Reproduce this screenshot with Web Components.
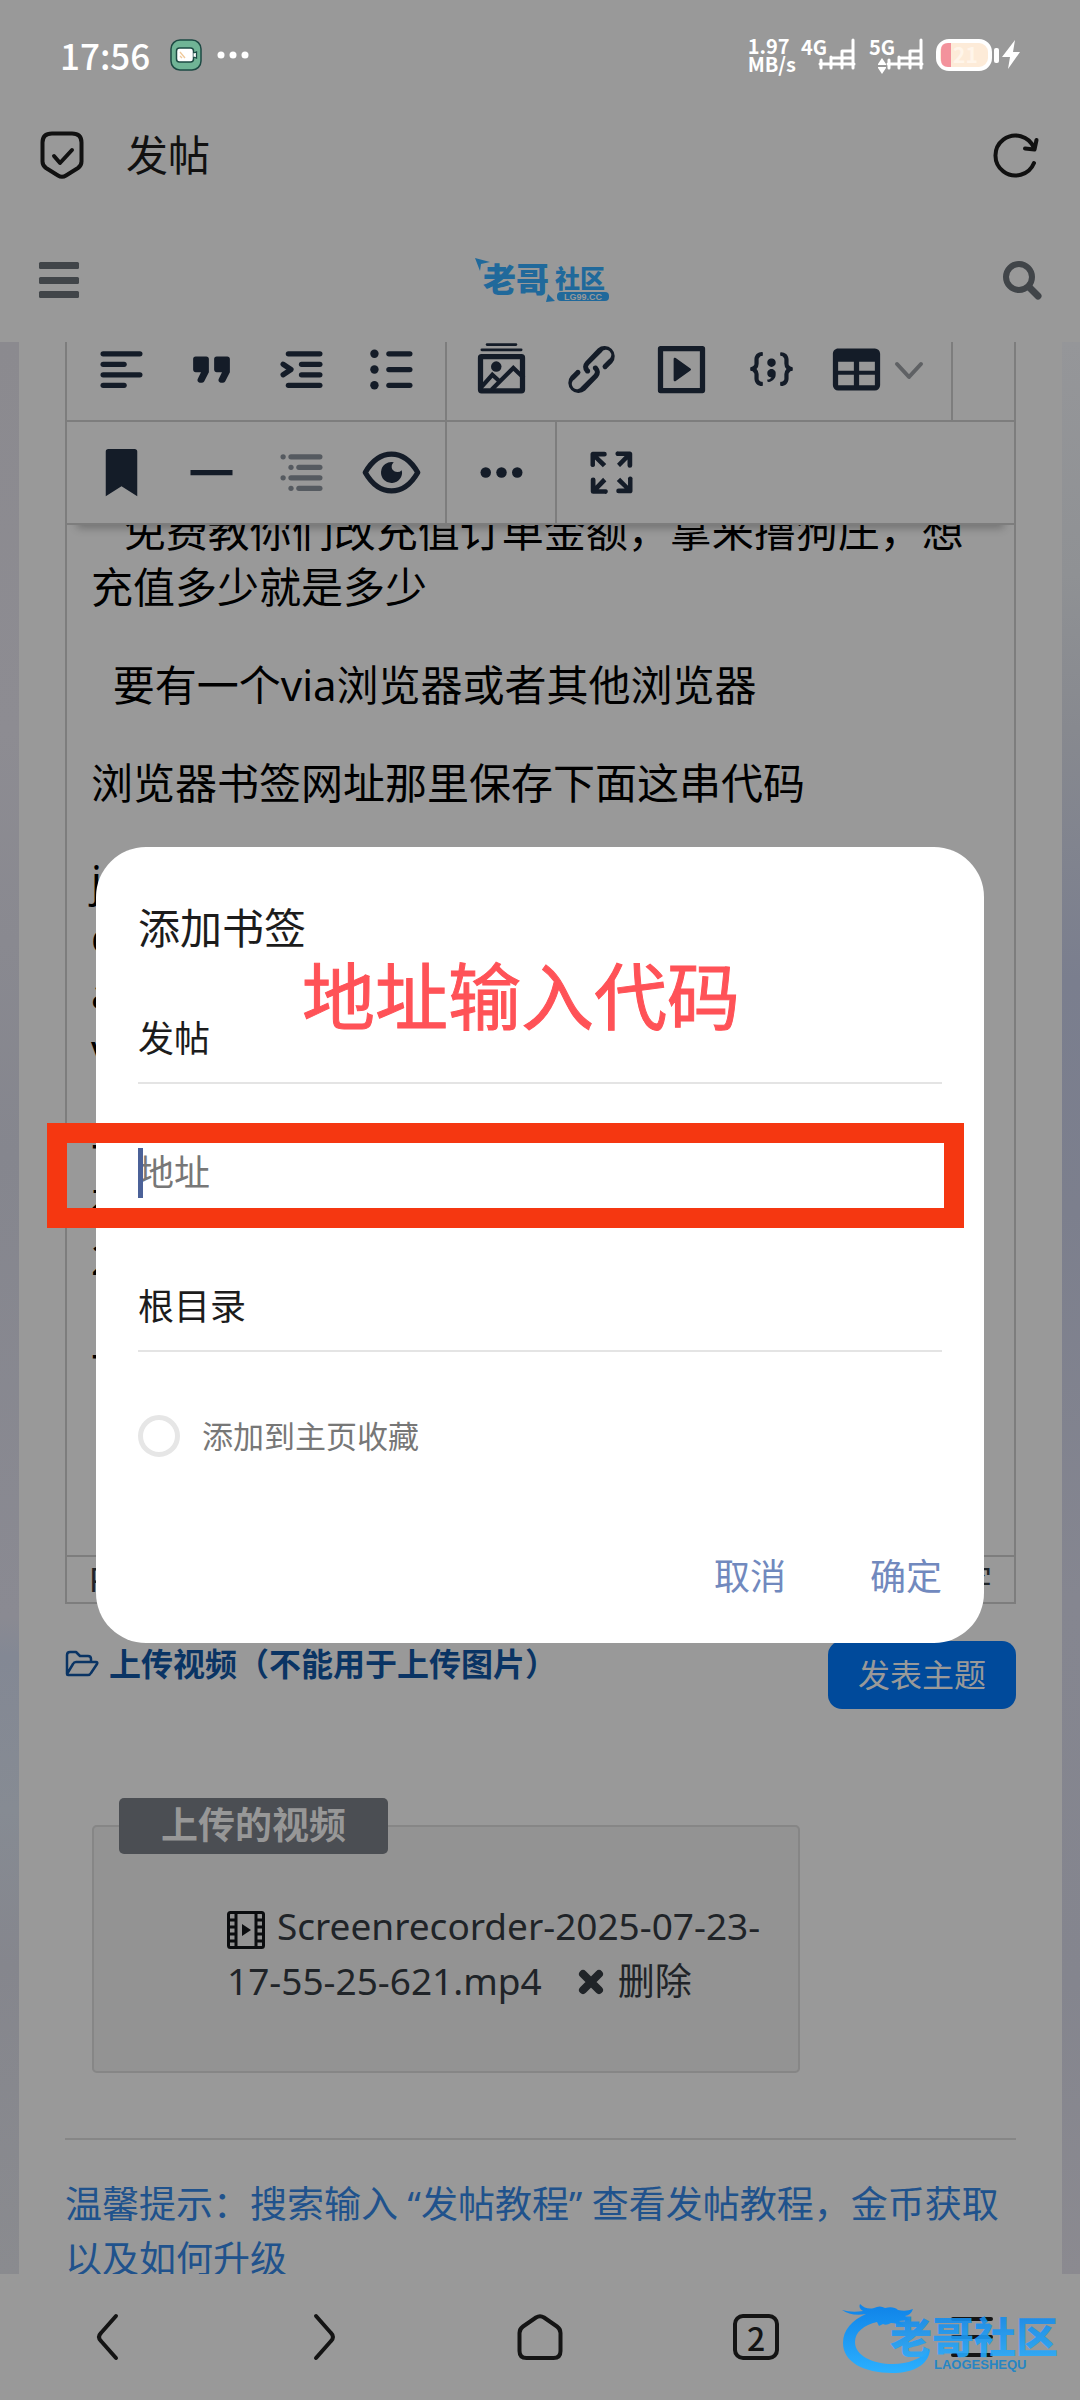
<!DOCTYPE html>
<html lang="zh-CN">
<head>
<meta charset="utf-8">
<meta name="viewport" content="width=device-width, initial-scale=1">
<title>发帖</title>
<style>
  html, body { margin: 0; height: 100%; }
  body {
    font-family: "Noto Sans", "Noto Sans CJK SC", sans-serif;
    font-size: 37px;
    line-height: 55px;
    color: #202428;
    background: #999;
    -webkit-text-size-adjust: none;
  }
</style>
</head>
<body>
<phone-screen>
  <status-bar></status-bar>
  <browser-bar>发帖</browser-bar>
  <site-header></site-header>
  <page-view>
    <post-editor></post-editor>
    <upload-actions></upload-actions>
    <uploaded-videos></uploaded-videos>
    <page-tip>温馨提示：搜索输入 “发帖教程” 查看发帖教程，金币获取以及如何升级</page-tip>
  </page-view>
  <bottom-nav tabs="2"></bottom-nav>
  <bookmark-dialog slot="overlay" heading="添加书签">
    <red-note slot="note">地址输入代码</red-note>
  </bookmark-dialog>
</phone-screen>

<script>
const BASE = `<style>
  :host, *, *::before, *::after { box-sizing: border-box; }
  button, input, select { font: inherit; color: inherit; background: none; border: 0; margin: 0; padding: 0; border-radius: 0; outline: 0; appearance: none; }
  svg { display: block; overflow: visible; }
</style>`;

function define(name, markup) {
  customElements.define(name, class extends HTMLElement {
    connectedCallback() {
      if (this.shadowRoot) return;
      const root = this.attachShadow({ mode: 'open' });
      root.innerHTML = BASE + (typeof markup === 'function' ? markup(this) : markup);
    }
  });
}

const ICONS = {
  alignLeft: '<rect x="4" y="5" width="16" height="2" rx="1"/><rect x="4" y="9" width="10" height="2" rx="1"/><rect x="4" y="13" width="16" height="2" rx="1"/><rect x="4" y="17" width="10" height="2" rx="1"/>',
  quote: '<path d="M7.5 17h.9c.4 0 .7-.2.9-.6L11 13V8c0-.6-.4-1-1-1H6a1 1 0 0 0-1 1v4c0 .6.4 1 1 1h2l-1.3 2.7a1 1 0 0 0 .8 1.3Zm8 0h.9c.4 0 .7-.2.9-.6L19 13V8c0-.6-.4-1-1-1h-4a1 1 0 0 0-1 1v4c0 .6.4 1 1 1h2l-1.3 2.7a1 1 0 0 0 .8 1.3Z"/>',
  indent: '<rect x="6" y="5" width="14" height="2" rx="1"/><rect x="11" y="9" width="9" height="2" rx="1"/><rect x="11" y="13" width="9" height="2" rx="1"/><rect x="6" y="17" width="14" height="2" rx="1"/><path d="M5 10l3 2-3 2" fill="none" stroke="currentColor" stroke-width="2" stroke-linecap="round" stroke-linejoin="round"/>',
  list: '<circle cx="5.5" cy="6" r="1.6"/><circle cx="5.5" cy="12" r="1.6"/><circle cx="5.5" cy="18" r="1.6"/><rect x="10" y="5" width="10" height="2" rx="1"/><rect x="10" y="11" width="10" height="2" rx="1"/><rect x="10" y="17" width="10" height="2" rx="1"/>',
  gallery: '<rect x="6" y="2" width="12" height="1" rx=".5"/><rect x="4" y="4" width="16" height="1" rx=".5"/><rect x="4" y="7.1" width="16" height="13" rx=".4" fill="none" stroke="currentColor" stroke-width="2"/><circle cx="10" cy="10.9" r="2"/><path d="M4.500 18.500l4-4.500 2.300 2.100M8.200 19.700l8.300-8.300 4 3.800" fill="none" stroke="currentColor" stroke-width="1.600"/>',
  link: '<path d="M6.2 12.3a1 1 0 0 1 1.4 1.4l-2 2a2 2 0 1 0 2.6 2.8l4.8-4.8a1 1 0 0 0 0-1.4 1 1 0 1 1 1.4-1.3 2.9 2.9 0 0 1 0 4L9.6 20a3.9 3.9 0 0 1-5.5-5.5l2-2Zm11.6-.6a1 1 0 0 1-1.4-1.4l2-2a2 2 0 1 0-2.6-2.8L11 10.3a1 1 0 0 0 0 1.4A1 1 0 1 1 9.6 13a2.9 2.9 0 0 1 0-4L14.4 4a3.9 3.9 0 0 1 5.5 5.5l-2 2Z"/>',
  media: '<path fill-rule="evenodd" d="M4 3h16c.6 0 1 .4 1 1v16c0 .6-.4 1-1 1H4a1 1 0 0 1-1-1V4c0-.6.4-1 1-1Zm1 2v14h14V5H5Zm4.800 2.600 5.600 4a.5.5 0 0 1 0 .8l-5.600 4A.5.5 0 0 1 9 16V8a.5.5 0 0 1 .8-.4Z"/>',
  code: '<path fill-rule="evenodd" transform="translate(0 -1.200)" d="M7.1 11a2.8 2.8 0 0 1-.8 2 2.8 2.8 0 0 1 .8 2v1.7c0 .3.1.6.4.8.2.3.5.4.8.4.3 0 .4.2.4.4v.8c0 .2-.1.4-.4.4-.7 0-1.4-.3-2-.8-.5-.6-.8-1.3-.8-2V15c0-.3-.1-.6-.4-.8-.2-.3-.5-.4-.8-.4a.4.4 0 0 1-.4-.4v-.8c0-.2.2-.4.4-.4.3 0 .6-.1.8-.4.3-.2.4-.5.4-.8V9.300c0-.7.3-1.4.8-2 .6-.5 1.3-.8 2-.8.3 0 .4.2.4.4v.8c0 .2-.1.4-.4.4-.3 0-.6.1-.8.4-.3.2-.4.5-.4.8V11Zm9.800 0V9.300c0-.3-.1-.6-.4-.8-.2-.3-.5-.4-.8-.4a.4.4 0 0 1-.4-.4V7c0-.2.1-.4.4-.4.7 0 1.4.3 2 .8.5.6.8 1.3.8 2V11c0 .3.1.6.4.8.2.3.5.4.8.4.2 0 .4.2.4.4v.8c0 .2-.2.4-.4.4-.3 0-.6.1-.8.4-.3.2-.4.5-.4.8v1.7c0 .7-.3 1.4-.8 2-.6.5-1.300.8-2 .8a.4.4 0 0 1-.4-.4v-.8c0-.2.1-.4.4-.4.3 0 .6-.1.8-.4.3-.2.4-.5.4-.8V15a2.800 2.800 0 0 1 .8-2 2.800 2.800 0 0 1-.8-2Zm-3.300-.4c0 .4-.1.8-.5 1.100-.3.3-.7.5-1.100.5-.4 0-.8-.2-1.100-.5-.4-.3-.5-.7-.5-1.100 0-.5.1-.9.5-1.200.3-.3.7-.4 1.100-.4.4 0 .8.1 1.100.4.4.3.5.7.5 1.200ZM12 13c.4 0 .8.1 1.100.5.4.3.5.7.5 1.100 0 1-.1 1.600-.5 2a3 3 0 0 1-1.100 1c-.4.3-.8.4-1.100.4a.5.5 0 0 1-.5-.5V17a3 3 0 0 0 1-.2l.6-.6c-.6 0-1-.2-1.300-.5-.2-.3-.3-.7-.3-1 0-.5.1-1 .5-1.200.3-.4.7-.5 1.100-.5Z"/>',
  table: '<path fill-rule="evenodd" d="M19 4a2 2 0 0 1 2 2v12a2 2 0 0 1-2 2H5a2 2 0 0 1-2-2V6c0-1.100.9-2 2-2h14ZM5 14v4h6v-4H5Zm14 0h-6v4h6v-4Zm0-5h-6v3.500h6V9ZM5 12.500h6V9H5v3.500Z"/>',
  bookmark: '<path d="M6 4v17l6-3.800 6 3.800V4c0-.6-.4-1-1-1H7a1 1 0 0 0-1 1Z"/>',
  rule: '<path d="M4 11h16v2H4z"/>',
  toc: '<g opacity=".5"><circle cx="5" cy="6" r="1"/><rect x="7" y="5" width="13" height="2" rx="1"/><circle cx="8" cy="10" r="1"/><rect x="10" y="9" width="10" height="2" rx="1"/><circle cx="5" cy="14" r="1"/><rect x="7" y="13" width="13" height="2" rx="1"/><circle cx="8" cy="18" r="1"/><rect x="10" y="17" width="10" height="2" rx="1"/></g>',
  eye: '<path d="M2 12C4.700 7.300 8 5 12 5s7.300 2.300 10 7c-2.700 4.700-6 7-10 7s-7.300-2.300-10-7z" fill="none" stroke="currentColor" stroke-width="2" stroke-linejoin="round"/><path d="M12.900 8.100a4 4 0 1 0 3 3 2.300 2.300 0 0 1-3.400-.1c-.7-.9-.5-2.200.4-2.900z"/>',
  more: '<circle cx="6" cy="12" r="2"/><circle cx="12" cy="12" r="2"/><circle cx="18" cy="12" r="2"/>',
  expand: '<path d="m15.300 10-1.200-1.300 2.900-3h-2.300a.9.9 0 1 1 0-1.700H19c.5 0 .9.4.9.9v4.400a.9.9 0 1 1-1.800 0V7l-2.900 3Zm0 4 3 3v-2.300a.9.9 0 1 1 1.700 0V19c0 .5-.4.9-.9.9h-4.400a.9.9 0 1 1 0-1.800H17l-3-2.900 1.300-1.200ZM10 15.400l-2.900 3h2.300a.9.9 0 1 1 0 1.700H5a.9.9 0 0 1-.9-.9v-4.400a.9.9 0 1 1 1.800 0V17l2.900-3 1.200 1.300ZM8.700 10 5.700 7v2.300a.9.9 0 0 1-1.700 0V5c0-.5.4-.9.9-.9h4.400a.9.9 0 0 1 0 1.800H7l3 2.900-1.300 1.200Z"/>'
};

define('tool-button', el => `<style>
  :host { display: block; }
  button { display: flex; align-items: center; justify-content: center; width: 90px; height: 100%; color: #141c28; }
  button.menu { width: 126px; justify-content: flex-start; padding-left: 9px; }
</style>
<button type="button" class="${el.hasAttribute('menu') ? 'menu' : ''}" aria-label="${el.getAttribute('label')}">
  <svg width="63" height="63" viewBox="0 0 24 24" fill="currentColor">${ICONS[el.getAttribute('icon')]}</svg>
  ${el.hasAttribute('menu') ? '<svg width="40" height="40" viewBox="0 0 40 40" fill="none" stroke="#5f6164" stroke-width="4" stroke-linecap="round" stroke-linejoin="round"><path d="M9 14l12 13 12-13"/></svg>' : ''}
</button>`);

define('tool-group', `<style>
  :host { display: flex; align-items: stretch; padding: 0 9px; border-right: 2px solid #7d7d7d; }
  :host([last]) { border-right: 0; }
</style><slot></slot>`);

define('post-editor', `<style>
  :host { display: block; margin-top: -23px; border: 2px solid #7d7d7d; border-top: 0; }
  .tools { position: relative; z-index: 1; background: #999; }
  .tools::after { content: ""; position: absolute; z-index: -1; inset: auto 10px 0; height: 20px; box-shadow: 0 3px 8px #0004; }
  .row { position: relative; display: flex; height: 103px; background: #999; border-bottom: 2px solid #7d7d7d; }
  .body { margin-top: -22px; min-height: 1052px; padding: 0 24px; font-size: 42px; line-height: 56px; color: #000; white-space: pre-wrap; outline: 0; }
  p { margin: 0 0 42px; }
  footer { display: flex; justify-content: space-between; height: 47px; padding: 0 22px; border-top: 2px solid #7d7d7d; font-size: 32px; line-height: 45px; }
</style>
<div class="tools">
  <div class="row">
    <tool-group><tool-button icon="alignLeft" label="左对齐"></tool-button><tool-button icon="quote" label="引用"></tool-button><tool-button icon="indent" label="缩进"></tool-button><tool-button icon="list" label="列表"></tool-button></tool-group>
    <tool-group><tool-button icon="gallery" label="图片"></tool-button><tool-button icon="link" label="链接"></tool-button><tool-button icon="media" label="媒体"></tool-button><tool-button icon="code" label="代码"></tool-button><tool-button icon="table" label="表格" menu></tool-button></tool-group>
  </div>
  <div class="row">
    <tool-group><tool-button icon="bookmark" label="书签"></tool-button><tool-button icon="rule" label="分隔线"></tool-button><tool-button icon="toc" label="目录"></tool-button><tool-button icon="eye" label="预览"></tool-button></tool-group>
    <tool-group><tool-button icon="more" label="更多"></tool-button></tool-group>
    <tool-group last><tool-button icon="expand" label="全屏"></tool-button></tool-group>
  </div>
</div>
<div class="body" contenteditable="true" spellcheck="false"><p>   免费教你们改充值订单金额，拿来撸狗庄，想充值多少就是多少</p><p>  要有一个via浏览器或者其他浏览器</p><p>浏览器书签网址那里保存下面这串代码</p><p>j
c
a
v</p><p>一
在
2</p><p>一</p></div>
<footer><span>P</span><span>字</span></footer>`);

define('phone-screen', `<style>
  :host { position: relative; display: flex; flex-direction: column; height: 100vh; overflow: hidden; background: #999; }
</style><slot></slot><slot name="overlay"></slot>`);

define('signal-bars', `<style>:host { display: block; }</style>
<svg width="38" height="32" viewBox="0 0 38 32" fill="none" stroke="#fff" stroke-width="3" stroke-linecap="round"><path d="M2 26h34M3 22v8M13 19v11M13 20h10M24 13v17M24 13h11M24 20h11M35 2v28"/></svg>`);

define('status-bar', `<style>
  :host { display: flex; align-items: center; justify-content: space-between; height: 93px; padding: 17px 58px 0 60px; color: #fff; font-family: "Noto Sans CJK SC", sans-serif; }
  div { display: flex; align-items: center; }
  time { font-size: 35px; font-weight: 500; line-height: 40px; margin-right: 5px; }
  .left { gap: 15px; }
  .right { gap: 4px; }
  .speed, .net { font-size: 20px; font-weight: 700; line-height: 18px; }
  .net { align-items: flex-start; }
  .net > div { flex-direction: column; width: 28px; height: 34px; gap: 2px; }
  .net signal-bars { margin-left: -10px; }
  .net + .net, .battery { margin-left: 8px; }
</style>
<div class="left">
  <time>17:56</time>
  <svg width="32" height="32" viewBox="0 0 32 32"><rect x="1" y="1" width="30" height="30" rx="9" fill="#70b496" stroke="#1d4a44" stroke-width="1.500"/><rect x="6.500" y="9" width="17" height="14" rx="3" fill="#fff" stroke="#1d4a44" stroke-width="1.500"/><path d="M23.500 14l3-1v6l-3-1" fill="#fff" stroke="#1d4a44" stroke-width="1.300"/><path d="M10 13l5 6M10 17l2 2" stroke="#efc99a" stroke-width="1.300"/></svg>
  <svg width="32" height="8" viewBox="0 0 32 8" fill="#fff"><circle cx="4" cy="4" r="3.500"/><circle cx="16" cy="4" r="3.500"/><circle cx="28" cy="4" r="3.500"/></svg>
</div>
<div class="right">
  <div class="speed"><span>1.97<br>MB/s</span></div>
  <div class="net"><div>4G</div><signal-bars></signal-bars></div>
  <div class="net"><div>5G<svg width="10" height="16" viewBox="0 0 10 16" fill="#fff"><path d="M5 0l4 6v1H1V6zM5 16l4-6V9H1v1z"/></svg></div><signal-bars></signal-bars></div>
  <svg class="battery" width="86" height="32" viewBox="0 0 86 32"><rect x="2" y="2" width="52" height="28" rx="11" fill="#fdebd8" stroke="#fff" stroke-width="4"/><path d="M15 4v24h-3q-7 0-7-7V11q0-7 7-7z" fill="#f3929c"/><text x="17" y="24" font-size="21" font-weight="700" fill="#fff5ea">21</text><rect x="58" y="9" width="5" height="15" rx="2" fill="#fff"/><path d="M79 1L66 18h8l-2 12 12-17h-7z" fill="#fff"/></svg>
</div>`);

define('browser-bar', `<style>
  :host { display: flex; align-items: center; height: 124px; padding: 0 40px; color: #111; font-size: 42px; line-height: 56px; }
  h1 { flex: 1; margin: 0 0 0 42px; font: inherit; }
</style>
<svg width="44" height="48" viewBox="0 0 44 48" fill="none" stroke="currentColor" stroke-width="4" stroke-linecap="round" stroke-linejoin="round"><path d="M12 2.500h20q9.500 0 9.500 9v19q0 4-3.500 6.500L26 44.500q-4 2.500-8 0L6 37q-3.500-2.500-3.500-6.500v-19q0-9 9.500-9z"/><path d="M14 25l6 7 12-13"/></svg>
<h1><slot></slot></h1>
<button type="button" aria-label="刷新"><svg width="50" height="48" viewBox="0 0 50 48" fill="none" stroke="currentColor" stroke-width="4" stroke-linecap="round" stroke-linejoin="round"><path d="M44 32A20 20 0 1 1 44 17"/><path d="M35 17.500l9.500 1L46.500 9"/></svg></button>`);

define('site-header', `<style>
  :host { position: relative; z-index: 2; display: flex; align-items: center; justify-content: space-between; height: 125px; padding: 0 36px 0 38px; background: #999; color: #414549; }
  text { font-family: "Noto Sans CJK SC", sans-serif; font-weight: 900; fill: #20699b; }
  .cc { fill: #999; font-family: "Liberation Sans", sans-serif; font-weight: 700; }
</style>
<button type="button" aria-label="菜单"><svg width="42" height="38" viewBox="0 0 42 38" fill="currentColor"><rect x="1" y="1" width="40" height="7" rx="1.500"/><rect x="1" y="16" width="40" height="7" rx="1.500"/><rect x="1" y="30" width="40" height="7" rx="1.500"/></svg></button>
<a href="#" aria-label="老哥社区"><svg width="134" height="48" viewBox="0 0 134 48"><path d="M1 2l15 4-9 2-1 7z" fill="#20699b"/><text x="9" y="36" font-size="33">老哥</text><text x="81" y="32" font-size="25">社区</text><path d="M74 38l7 7-9 1z" fill="#20699b"/><rect x="83" y="36" width="52" height="9" rx="4" fill="#20699b"/><text class="cc" x="90" y="44" font-size="9">LG99.CC</text></svg></a>
<button type="button" aria-label="搜索"><svg width="42" height="42" viewBox="0 0 42 42" fill="none" stroke="currentColor"><circle cx="17" cy="18" r="13" stroke-width="6"/><path d="M27 28l9 9" stroke-width="7" stroke-linecap="round"/></svg></button>`);

define('page-view', `<style>
  :host { display: block; flex: 1; min-height: 0; overflow: hidden; padding: 0 18px 0 19px;
    background:
      linear-gradient(#8b8a8f, #8d8c92 20%, #85868e 42%, #8a8a92 66%, #838894 68%, #868b93 76%, #85868d 84%, #8a8b8f) left / 19px 100% no-repeat,
      linear-gradient(#959699, #8f9194 12%, #87898f 20%, #7a7e8e 33%, #7c7f8d 45%, #858690 65%, #84858e 85%, #8b8a90) right / 18px 100% no-repeat; }
  main { display: flow-root; min-height: 100%; padding: 0 46px; background: #999; }
</style><main><slot></slot></main>`);

define('upload-actions', `<style>
  :host { display: flex; justify-content: space-between; align-items: flex-start; margin-top: 37px; font-size: 32px; line-height: 46px; }
  a { display: flex; align-items: center; gap: 8px; color: #0a3464; font-weight: 700; text-decoration: none; }
  button { width: 188px; height: 68px; border-radius: 14px; background: #004a9b; color: #999; }
</style>
<a href="#"><svg width="36" height="30" viewBox="0 0 36 30" fill="none" stroke="currentColor" stroke-width="2.500" stroke-linejoin="round"><path d="M2 25V6q0-3 3-3h6l4 4h8q3 0 3 3v3M2 25l6-10q1-2 3-2h20q2 0 1 2l-6 9q-1 2-3 2H3q-1 0-1-1z"/></svg>上传视频（不能用于上传图片）</a>
<button type="button">发表主题</button>`);

define('uploaded-videos', `<style>
  :host { display: block; margin: 89px 0 0 27px; }
  fieldset { max-width: 708px; min-width: 0; margin: 0; padding: 44px 25px 63px; border: 2px solid #868686; border-radius: 5px; background: #939393; }
  legend { height: 56px; padding: 0 42px; border-radius: 5px; background: #4b4e53; color: #979797; font-weight: 700; line-height: 54px; }
  .file { padding-left: 108px; }
  .film { display: inline-block; vertical-align: -9px; margin-right: 12px; }
  button { margin-left: 36px; }
  button svg { display: inline-block; margin-right: 14px; }
</style>
<fieldset>
  <legend>上传的视频</legend>
  <div class="file"><svg class="film" width="38" height="38" viewBox="0 0 38 38" fill="none" stroke="#0b0d0f" stroke-width="3"><rect x="1.500" y="1.500" width="35" height="35" rx="2"/><path d="M9 2v34M29 2v34M2 9h7M2 16h7M2 23h7M2 30h7M29 9h7M29 16h7M29 23h7M29 30h7"/><path d="M15 13l9 6-9 6z" fill="#0b0d0f" stroke="none"/></svg>Screenrecorder-2025-07-23-17-55-25-621.mp4<button type="button"><svg width="26" height="26" viewBox="0 0 26 26" stroke="#202428" stroke-width="8" stroke-linecap="round"><path d="M5 5l16 16M21 5L5 21"/></svg>删除</button></div>
</fieldset>`);

define('page-tip', `<style>
  :host { display: block; margin-top: 65px; padding-top: 36px; border-top: 2px solid #868686; }
  a { color: #20528c; text-decoration: none; }
</style><a href="#"><slot></slot></a>`);

define('bottom-nav', el => `<style>
  :host { position: relative; display: block; height: 126px; background: #999; color: #141414; }
  nav { display: grid; grid-template-columns: repeat(5, 1fr); height: 100%; }
  button { display: grid; place-items: center; }
  .tabs span { display: grid; place-items: center; width: 46px; height: 46px; border: 4px solid #141414; border-radius: 10px; font-size: 32px; font-weight: 500; line-height: 38px; font-family: "Noto Sans CJK SC", sans-serif; }
  site-watermark { position: absolute; right: 8px; top: 26px; }
</style>
<nav>
  <button type="button" aria-label="后退"><svg width="48" height="48" viewBox="0 0 48 48" fill="none" stroke="currentColor" stroke-width="4" stroke-linecap="round"><path d="M32 3L17 20q-4 4 0 8l15 17"/></svg></button>
  <button type="button" aria-label="前进"><svg width="48" height="48" viewBox="0 0 48 48" fill="none" stroke="currentColor" stroke-width="4" stroke-linecap="round"><path d="M16 3l15 17q4 4 0 8L16 45"/></svg></button>
  <button type="button" aria-label="主页"><svg width="48" height="48" viewBox="0 0 48 48" fill="none" stroke="currentColor" stroke-width="4" stroke-linejoin="round"><path d="M20 4.500q4-2.500 8 0l13 9q3.500 2.500 3.500 6.500v18q0 7-7 7h-27q-7 0-7-7V20q0-4 3.500-6.500z"/></svg></button>
  <button type="button" class="tabs" aria-label="标签页"><span>${el.getAttribute('tabs')}</span></button>
  <button type="button" aria-label="菜单"><svg width="48" height="48" viewBox="0 0 48 48" stroke="currentColor" stroke-width="4" stroke-linecap="round"><path d="M5 6h38M5 24h38M5 42h38"/></svg></button>
</nav>
<site-watermark></site-watermark>`);

define('site-watermark', `<style>
  :host { display: block; pointer-events: none; }
  text { font-family: "Noto Sans CJK SC", sans-serif; font-weight: 900; }
  .latin { font-family: "Liberation Sans", sans-serif; font-weight: 700; }
</style>
<svg width="230" height="78" viewBox="0 0 230 78">
  <defs><linearGradient id="g" x1="0" y1="0" x2="0" y2="1"><stop offset="0" stop-color="#0f83e8"/><stop offset="1" stop-color="#2bb0ff"/></linearGradient></defs>
  <path fill="url(#g)" d="M0 10q10 3 21 1-5-3-3-7 6 6 14 4 6-3 11 0 9-2 13 2 8 2 15-1-2 6-8 7l5 4-11 1 6 5q-9-3-14-3-5 3-8 1l-4 2-2-4C22 25 13 32 13 42c0 14 18 22 38 22 15 0 28-5 37-15-1 16-17 24-38 24C22 73 1 62 1 43 1 30 10 20 24 14 14 16 6 14 0 10z"/>
  <text x="48" y="53" font-size="42" fill="url(#g)" opacity=".9">老哥社区</text>
  <text class="latin" x="92" y="69" font-size="13" fill="#2686c4">LAOGESHEQU</text>
</svg>`);

define('red-note', `<style>
  :host { color: #ff5257; font-size: 73px; font-weight: 400; line-height: 84px; white-space: nowrap; -webkit-text-stroke: 1px #ff5257; }
</style><slot></slot>`);

define('bookmark-dialog', el => `<style>
  :host { position: absolute; inset: 90px 96px 0; z-index: 5; display: flex; align-items: center; pointer-events: none; font-size: 36px; }
  form { position: relative; flex: 1; padding: 56px 42px 37px; border-radius: 50px; background: #fff; color: #1c1c1c; pointer-events: auto; }
  h2 { margin: 0 0 43px; font-size: 42px; font-weight: 400; line-height: 50px; }
  .fields { display: grid; gap: 46px; }
  .field { position: relative; display: block; border-bottom: 2px solid #e4e4e4; }
  .field input, .field select { display: block; width: 100%; height: 86px; line-height: 86px; }
  input::placeholder { color: #777; opacity: 1; }
  .caret::before { content: ""; position: absolute; left: 0; top: 18px; width: 5px; height: 50px; background: #4b6198; }
  .check { display: flex; align-items: center; gap: 22px; height: 42px; margin-top: 63px; color: #777; font-size: 31px; }
  .check input { width: 42px; height: 42px; border: 5px solid #e6e6e6; border-radius: 50%; }
  .actions { display: flex; justify-content: flex-end; gap: 84px; margin-top: 89px; }
  .actions button { height: 60px; color: #7189be; }
  .frame { position: absolute; left: -49px; right: 20px; top: 276px; height: 105px; border: 20px solid #f53711; pointer-events: none; }
  ::slotted([slot=note]) { position: absolute; left: 206px; top: 107px; }
</style>
<form role="dialog" aria-label="${el.getAttribute('heading')}">
  <h2>${el.getAttribute('heading')}</h2>
  <div class="fields">
    <label class="field"><input type="text" value="发帖" aria-label="标题"></label>
    <label class="field caret"><input type="text" placeholder="地址" aria-label="地址"></label>
    <label class="field"><select aria-label="目录"><option>根目录</option></select></label>
  </div>
  <label class="check"><input type="checkbox">添加到主页收藏</label>
  <div class="actions"><button type="button">取消</button><button type="button">确定</button></div>
  <slot name="note"></slot>
  <div class="frame"></div>
</form>`);
</script>
</body>
</html>
